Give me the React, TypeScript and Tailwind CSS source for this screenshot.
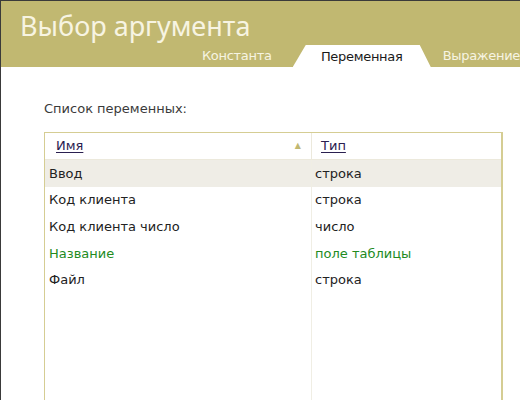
import React from "react";

const rows = [
  { name: "Ввод", type: "строка", selected: true },
  { name: "Код клиента", type: "строка" },
  { name: "Код клиента число", type: "число" },
  { name: "Название", type: "поле таблицы", green: true },
  { name: "Файл", type: "строка" },
];

export default function App() {
  return (
    <div className="w-[520px] h-[400px] overflow-hidden bg-white border-t border-l border-[#3a3a3a] font-['DejaVu_Sans',sans-serif] text-[13px] text-[#222]">
      {/* Header */}
      <div className="bg-[#c1b871] h-[66px] flex flex-col">
        <div className="pl-[19px] pt-[8px] text-[27px] leading-[34px] text-[#f7f4e2] font-['Noto_Sans',sans-serif]">
          Выбор аргумента
        </div>
        <div className="mt-auto flex items-end h-[22px]">
          <div className="w-[180px]" />
          <div className="w-[112px] text-center text-[#f7f4e2] leading-[22px] tracking-[-0.3px]">Константа</div>
          <div className="w-[138px] h-[22px] bg-white text-center leading-[24px] text-[#1a1a1a] tracking-[-0.3px] [clip-path:polygon(13px_0,127px_0,138px_100%,0_100%)]">
            Переменная
          </div>
          <div className="pl-[12px] text-[#f7f4e2] leading-[22px] whitespace-nowrap tracking-[-0.3px]">Выражение</div>
        </div>
      </div>

      {/* Content */}
      <div className="pl-[43px] pr-[17px] pt-[34px]">
        <div className="text-[#3a3a3a] leading-[16px] mb-[15px]">Список переменных:</div>
        <div className="border-l border-t border-r-2 border-[#d5cd93] h-[300px]">
          <div className="flex h-[27px] items-center border-b border-[#ece9dc]">
            <div className="w-[266px] flex items-center pl-[11px] pr-[10px]">
              <span className="underline underline-offset-2 text-[#2a2050]">Имя</span>
              <span className="ml-auto text-[8px] text-[#c1b871]">▲</span>
            </div>
            <div className="self-stretch w-px bg-[#ece9dc]" />
            <div className="pl-[9px]">
              <span className="underline underline-offset-2 text-[#2a2050]">Тип</span>
            </div>
          </div>
          <div className="flex">
            <div className="w-[266px]">
              {rows.map((r) => (
                <div
                  key={r.name}
                  className={`h-[26.7px] flex items-center pl-[4px] ${r.selected ? "bg-[#efede6]" : ""} ${r.green ? "text-[#228b1e]" : ""}`}
                >
                  {r.name}
                </div>
              ))}
            </div>
            <div className="w-px bg-[#f0eee4] h-[300px]" />
            <div className="flex-1">
              {rows.map((r) => (
                <div
                  key={r.name}
                  className={`h-[26.7px] flex items-center pl-[3px] ${r.selected ? "bg-[#efede6]" : ""} ${r.green ? "text-[#228b1e]" : ""}`}
                >
                  {r.type}
                </div>
              ))}
            </div>
          </div>
        </div>
      </div>
    </div>
  );
}
